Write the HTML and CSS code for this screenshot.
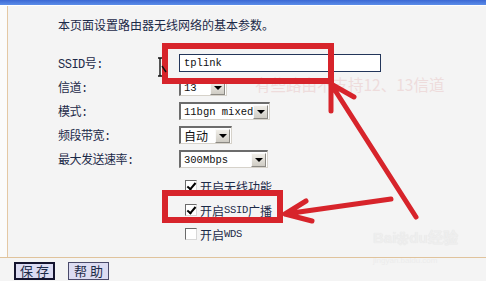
FILE: index.html
```html
<!DOCTYPE html>
<html lang="zh-CN">
<head>
  <meta charset="UTF-8" />
  <title>无线网络基本设置</title>
  <link rel="stylesheet" href="styles.css">
</head>
<body>
  <div class="topbar"></div>

  <div class="frame">
    <div class="gutter"></div>
    <div class="content">
      <p class="intro">本页面设置路由器无线网络的基本参数。</p>

      <div class="form">
        <label class="label">SSID号:</label>
        <div class="field"><div class="textbox">tplink</div></div>

        <label class="label">信道:</label>
        <div class="field">
          <div class="select w-channel"><span class="value">13</span><span class="drop"></span></div>
        </div>

        <label class="label">模式:</label>
        <div class="field">
          <div class="select w-mode"><span class="value">11bgn mixed</span><span class="drop"></span></div>
        </div>

        <label class="label">频段带宽:</label>
        <div class="field">
          <div class="select w-band"><span class="value cjk">自动</span><span class="drop"></span></div>
        </div>

        <label class="label">最大发送速率:</label>
        <div class="field">
          <div class="select w-rate"><span class="value">300Mbps</span><span class="drop"></span></div>
        </div>

        <div class="checks">
          <div class="check"><span class="box checked"></span>开启无线功能</div>
          <div class="check"><span class="box checked"></span>开启<span class="mono">SSID</span>广播</div>
          <div class="check"><span class="box"></span>开启<span class="mono">WDS</span></div>
        </div>
      </div>
    </div>
  </div>

  <div class="actions">
    <button class="btn default">保 存</button>
    <button class="btn">帮 助</button>
  </div>

  <!-- screenshot annotations -->
  <div class="note">有些路由不支持12、13信道</div>
  <div class="watermark">Bai<span class="paw">❀</span>du经验<small>jingyan.baidu.com</small></div>
  <svg class="marks" width="486" height="281" viewBox="0 0 486 281">
    <g fill="none" stroke="#d7242b" stroke-width="6" stroke-linecap="round" stroke-linejoin="round">
      <rect x="165" y="46" width="166" height="35" stroke-linecap="butt" stroke-linejoin="miter" />
      <rect x="165" y="193" width="115" height="27" stroke-linecap="butt" stroke-linejoin="miter" />
      <path d="M416 217 L331 84 M331 84 L331 111 M331 84 L354 97" stroke-width="5" />
      <path d="M391 199 L285 214 M285 214 L306 201 M285 214 L312 221" stroke-width="5" />
    </g>
    <path d="M160 58 L160 76 M158 58 L162 58 M158 76 L162 76 M162 66 L166 72" stroke="#111" stroke-width="1.4" fill="none" />
  </svg>
</body>
</html>
```

FILE: styles.css
```css
* {
  margin: 0;
  padding: 0;
  box-sizing: border-box;
}

body {
  width: 486px;
  height: 281px;
  overflow: hidden;
  position: relative;
  background-color: #f4f4f4;
  color: #1c2a48;
  font-family: "Noto Sans CJK SC", sans-serif;
  font-size: 12px;
  text-autospace: no-autospace;
}

.topbar {
  height: 6px;
  background: linear-gradient(#3b68d4, #5b8ce8 80%, #ffffff 80%);
}

.frame {
  display: flex;
  height: 252px;
  border-bottom: 1px solid #e0c39c;
}

.gutter {
  width: 8px;
  background-color: #fbfbfb;
  border-right: 1px solid #e4c8a4;
}

.content {
  flex: 1;
  padding: 11px 0 0 50px;
}

.intro {
  line-height: 16px;
  margin-bottom: 21px;
}

/* Form grid */
.form {
  display: grid;
  grid-template-columns: 121px auto;
  grid-auto-rows: 18px;
  row-gap: 6px;
}

.label {
  display: flex;
  align-items: center;
  font-family: "Liberation Mono", "Noto Sans CJK SC", monospace;
  font-size: 12px;
  letter-spacing: -0.5px;
}

.field {
  display: flex;
  align-items: center;
}

.textbox {
  width: 202px;
  height: 18px;
  background-color: #fff;
  border: 1px solid #23365a;
  padding-left: 4px;
  font-family: "Liberation Mono", monospace;
  font-size: 10.5px;
  line-height: 16px;
  color: #111;
}

.select {
  display: flex;
  align-items: center;
  height: 18px;
  background-color: #fff;
  border-style: solid;
  border-width: 2px 1px 1px 2px;
  border-color: #6c6c6c #d6d2ca #d6d2ca #6c6c6c;
}

.w-channel { width: 48px; }
.w-mode { width: 91px; }
.w-band { width: 53px; }
.w-rate { width: 89px; }

.value {
  flex: 1;
  padding-left: 3px;
  font-family: "Liberation Mono", monospace;
  font-size: 10.5px;
  color: #111;
  white-space: nowrap;
  overflow: hidden;
}

.value.cjk {
  font-family: "Noto Sans CJK SC", sans-serif;
  font-size: 12px;
}

.drop {
  width: 15px;
  height: 14px;
  margin-right: 1px;
  background: linear-gradient(#f0eee8, #cfccc4);
  border: 1px solid;
  border-color: #fafafa #8c8a84 #8c8a84 #fafafa;
  position: relative;
}

.drop::after {
  content: "";
  position: absolute;
  left: 3px;
  top: 4px;
  border-left: 4px solid transparent;
  border-right: 4px solid transparent;
  border-top: 4px solid #000;
}

/* Checkboxes */
.checks {
  grid-column: 2;
  grid-row: span 3;
  padding-left: 6px;
}

.check {
  display: flex;
  align-items: center;
  height: 24px;
  font-size: 12px;
}

.check .box {
  margin-right: 3px;
}

.mono {
  font-family: "Liberation Mono", monospace;
  font-size: 10.5px;
  letter-spacing: -0.3px;
}

.box {
  width: 12px;
  height: 12px;
  background-color: #fff;
  border: 1px solid;
  border-color: #6a6a6a #d8d8d8 #d8d8d8 #6a6a6a;
  position: relative;
}

.box.checked::after {
  content: "";
  position: absolute;
  left: 3px;
  top: 0px;
  width: 3px;
  height: 7px;
  border-right: 2px solid #000;
  border-bottom: 2px solid #000;
  transform: rotate(40deg);
}

/* Bottom buttons */
.actions {
  display: flex;
  gap: 13px;
  padding: 4px 0 0 14px;
  height: 28px;
}

.btn {
  width: 41px;
  height: 18px;
  background-color: #dcdcf2;
  border: 1px solid #4a4a6a;
  color: #1c2a48;
  font-family: "Noto Sans CJK SC", sans-serif;
  font-size: 13px;
  line-height: 14px;
}

.btn.default {
  border: 2px solid #14142e;
}

/* Annotation layers */
.note {
  position: absolute;
  left: 255px;
  top: 73px;
  font-size: 15.5px;
  color: #eedcdc;
  white-space: nowrap;
}

.watermark {
  position: absolute;
  left: 373px;
  top: 226px;
  font-family: "Liberation Sans", sans-serif;
  font-size: 15px;
  font-weight: bold;
  color: #eeeeee;
  text-shadow: 0 0 1px #e2e2e2;
  white-space: nowrap;
}

.watermark .paw {
  font-size: 13px;
}

.watermark small {
  display: block;
  font-size: 8px;
  font-weight: normal;
  margin-top: 9px;
  color: #ececec;
  text-shadow: none;
}

.marks {
  position: absolute;
  left: 0;
  top: 0;
  pointer-events: none;
}
```
